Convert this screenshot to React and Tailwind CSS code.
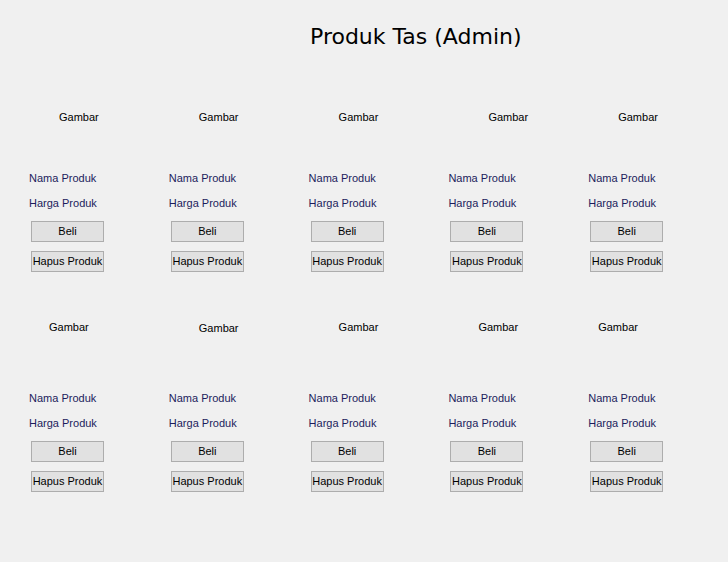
// App.jsx
import React from 'react';

const rows = [
  ['ml-[30px]', 'ml-[30px]', 'ml-[30px]', 'ml-[40px]', 'ml-[30px]'],
  [
    'ml-[20px] -mt-[10px] mb-[10px]',
    'ml-[30px] -mt-[9px] mb-[9px]',
    'ml-[30px] -mt-[10px] mb-[10px]',
    'ml-[30px] -mt-[10px] mb-[10px]',
    'ml-[10px] -mt-[10px] mb-[10px]',
  ],
];

const ProductCard = ({ gambarClass }) => (
  <div className="flex w-[140px] flex-col items-start">
    <span className={`${gambarClass} text-[11px] leading-[14px] text-black`}>Gambar</span>
    <span className="mt-[47px] text-[11px] leading-[14px] text-[#1c1c5c]">Nama Produk</span>
    <span className="mt-[11px] text-[11px] leading-[14px] text-[#1c1c5c]">Harga Produk</span>
    <button className="ml-[2px] mt-[11px] h-[21px] w-[73px] border border-[#adadad] bg-[#e1e1e1] text-[11px] leading-none text-black">
      Beli
    </button>
    <button className="ml-[2px] mt-[9px] h-[21px] w-[73px] border border-[#adadad] bg-[#e1e1e1] text-[11px] leading-none text-black">
      Hapus Produk
    </button>
  </div>
);

const App = () => {
  return (
    <div className="h-[562px] w-[728px] overflow-hidden bg-[#f0f0f0] font-['Liberation_Sans',Arial,sans-serif]">
      {/* Title */}
      <div className="pl-[310px] pt-[23px]">
        <h1 className="font-['DejaVu_Sans',sans-serif] text-[22px] leading-[28px] text-black">Produk Tas (Admin)</h1>
      </div>

      {/* Product grid */}
      <div className="mt-[59px] flex flex-col gap-y-[58px] pl-[29px]">
        {rows.map((row, r) => (
          <div key={r} className="flex">
            {row.map((g, i) => (
              <ProductCard key={i} gambarClass={g} />
            ))}
          </div>
        ))}
      </div>
    </div>
  );
};

export default App;
